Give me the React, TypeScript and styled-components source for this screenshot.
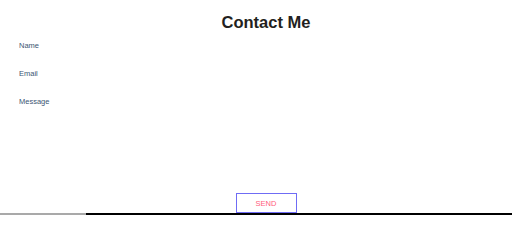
import React from 'react';
import styled, { createGlobalStyle } from 'styled-components';

const GlobalStyle = createGlobalStyle`
  html, body {
    margin: 0;
    padding: 0;
    background: #ffffff;
    font-family: 'Liberation Sans', Arial, sans-serif;
  }
`;

const Page = styled.div`
  width: 512px;
  height: 215px;
  display: flex;
  flex-direction: column;
  overflow: hidden;
`;

const Title = styled.h1`
  margin: 11px 0 0;
  height: 22px;
  line-height: 22px;
  font-size: 16.5px;
  font-weight: 700;
  color: #231f20;
  text-align: center;
  padding-left: 20px;
`;

const Form = styled.form`
  flex: 1;
  display: flex;
  flex-direction: column;
  padding: 7px 0 0 19px;
`;

const Field = styled.input`
  width: 200px;
  height: 10px;
  margin-bottom: 18px;
  padding: 0;
  border: none;
  outline: none;
  background: transparent;
  font-family: inherit;
  font-size: 7.5px;
  color: #2f4a66;
  &::placeholder {
    color: #3c5673;
  }
`;

const Actions = styled.div`
  margin-top: auto;
  display: flex;
  justify-content: center;
  padding-left: 20px;
`;

const SendButton = styled.button`
  width: 61px;
  height: 20px;
  padding: 0;
  border: 1px solid #6f6cf5;
  background: #ffffff;
  color: #ff5c7c;
  font-family: inherit;
  font-size: 7.5px;
`;

const Rule = styled.div`
  display: flex;
  height: 2px;
`;

const RuleSegment = styled.div<{ $grow: number; $color: string }>`
  flex: ${(p) => p.$grow};
  background: ${(p) => p.$color};
`;

export default function App() {
  return (
    <>
      <GlobalStyle />
      <Page>
        <Title>Contact Me</Title>
        <Form onSubmit={(e) => e.preventDefault()}>
          <Field placeholder="Name" autoFocus />
          <Field placeholder="Email" />
          <Field placeholder="Message" />
        </Form>
        <Actions>
          <SendButton type="submit">SEND</SendButton>
        </Actions>
        <Rule>
          <RuleSegment $grow={86} $color="#a9a9a9" />
          <RuleSegment $grow={426} $color="#000000" />
        </Rule>
      </Page>
    </>
  );
}
